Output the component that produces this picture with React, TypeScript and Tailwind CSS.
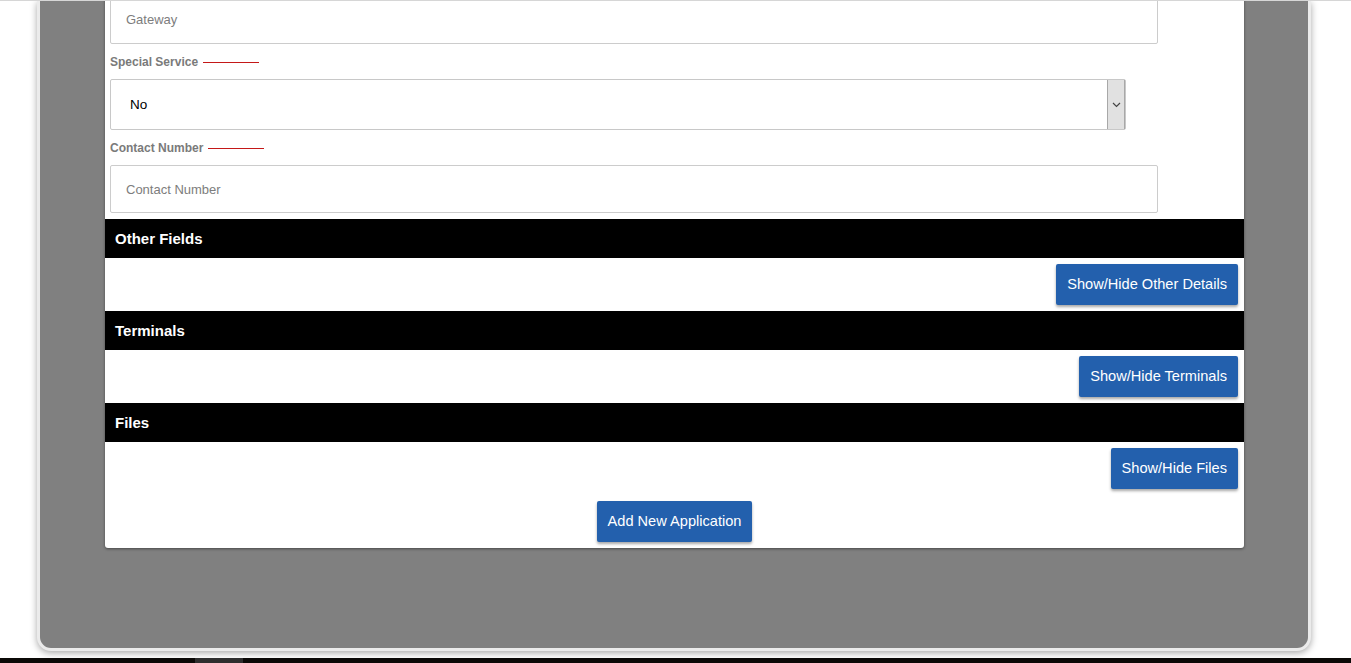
import React from "react";

function Label({ text }: { text: string }) {
  return (
    <div className="mt-[10px] flex h-[17px] items-center">
      <span className="text-[12px] font-bold leading-[17px] text-[#7a7a7a]">{text}</span>
      <span className="ml-[5px] h-px w-[56px] bg-[#c41818]" />
    </div>
  );
}

function Bar({ text }: { text: string }) {
  return (
    <div className="flex h-[39px] items-center bg-black pl-[10px] pt-[2px] text-[15px] font-bold text-white">
      {text}
    </div>
  );
}

function Btn({ text }: { text: string }) {
  return (
    <button className="h-[41px] rounded-[2px] bg-[#2360ad] px-[11px] pt-[1px] text-[14.6px] text-white shadow-[0_2px_3px_rgba(0,0,0,0.35)]">
      {text}
    </button>
  );
}

function BtnRow({ text }: { text: string }) {
  return (
    <div className="flex h-[53px] items-center justify-end pr-[6px]">
      <Btn text={text} />
    </div>
  );
}

export default function App() {
  return (
    <div className="flex h-[663px] w-full flex-col overflow-hidden border-t border-[#d6d6d6] bg-white font-['Liberation_Sans',Arial,sans-serif]">
      <div className="ml-[37px] w-[1274px] shrink-0 rounded-b-[14px] border-x-[3px] border-b-[3px] border-[#ebebeb] bg-[#808080] pb-[100px] shadow-[0_2px_7px_rgba(0,0,0,0.35)]">
        <div className="ml-[65px] mr-[64px] rounded-b-[3px] bg-white shadow-[0_1px_3px_rgba(0,0,0,0.45)]">
          <div className="px-[5px]">
            <div className="-mt-[5px] flex h-[48px] w-[1048px] items-center rounded-[2px] border border-[#cccccc] pl-[15px] text-[13px] text-[#7d7d7d]">
              Gateway
            </div>
            <Label text="Special Service" />
            <div className="mt-[8px] flex h-[51px] w-[1016px] items-center rounded-[2px] border border-[#c8c8c8]">
              <span className="flex-1 pl-[19px] pt-[2px] text-[13.5px] text-black">No</span>
              <div className="flex h-full w-[18px] items-center justify-center border-x border-[#a8a8a8] bg-[#e1e1e1]">
                <svg width="9" height="6" viewBox="0 0 9 6" fill="none">
                  <path d="M1 1l3.5 3.5L8 1" stroke="#444" strokeWidth="1.2" />
                </svg>
              </div>
            </div>
            <Label text="Contact Number" />
            <div className="mt-[8px] flex h-[48px] w-[1048px] items-center rounded-[2px] border border-[#cccccc] pl-[15px] pt-[2px] text-[13px] text-[#7d7d7d]">
              Contact Number
            </div>
          </div>
          <div className="mt-[6px]">
            <Bar text="Other Fields" />
            <BtnRow text="Show/Hide Other Details" />
            <Bar text="Terminals" />
            <BtnRow text="Show/Hide Terminals" />
            <Bar text="Files" />
            <BtnRow text="Show/Hide Files" />
            <div className="flex h-[53px] items-center justify-center">
              <Btn text="Add New Application" />
            </div>
          </div>
        </div>
      </div>
      <div className="flex-1" />
      <div className="flex h-[5px] shrink-0 bg-[#0b0907]">
        <div className="ml-[195px] h-full w-[48px] bg-[#2e2e2e]" />
      </div>
    </div>
  );
}
